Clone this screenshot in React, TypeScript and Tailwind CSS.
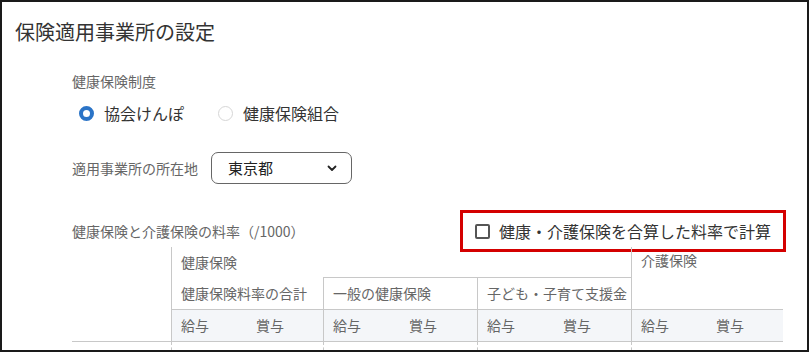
import React from 'react'

const font = { fontFamily: '"Noto Sans CJK JP", "Noto Sans", sans-serif' }

const Radio = ({ checked, label }: { checked: boolean; label: string }) => (
  <label className="flex items-center gap-[10px]">
    {checked ? (
      <span className="w-[15px] h-[15px] rounded-full border-[4px] border-[#2b74c7] bg-white" />
    ) : (
      <span className="w-[15px] h-[15px] rounded-full border border-[#d6d6d6] bg-white" />
    )}
    <span className="text-[16px] text-[#333]">{label}</span>
  </label>
)

const sub = ['給与', '賞与']

export default function App() {
  return (
    <div style={font} className="w-[809px] h-[352px] border-2 border-[#1a1a1a] bg-white overflow-hidden box-border">
      <h1 className="pl-[13px] pt-[15px] text-[20px] leading-[30px] text-[#333]">保険適用事業所の設定</h1>

      <div className="pl-[70px] pr-[21px]">
        <div className="mt-[24px] text-[14px] leading-[20px] text-[#666]">健康保険制度</div>
        <div className="mt-[11px] pl-[7px] flex items-center gap-[34px] h-[22px]">
          <Radio checked label="協会けんぽ" />
          <Radio checked={false} label="健康保険組合" />
        </div>

        <div className="mt-[28px] flex items-center gap-[13px]">
          <span className="text-[14px] text-[#666]">適用事業所の所在地</span>
          <div className="w-[141px] h-[32px] border border-[#666] rounded-[7px] flex items-center justify-between pl-[16px] pr-[14px]">
            <span className="text-[15px] text-[#222]">東京都</span>
            <svg width="10" height="7" viewBox="0 0 10 7" fill="none">
              <path d="M1.5 1.5 L5 5 L8.5 1.5" stroke="#222" strokeWidth="1.8" strokeLinecap="round" strokeLinejoin="round" />
            </svg>
          </div>
        </div>

        <div className="mt-[26px] flex items-center justify-between">
          <span className="text-[14px] text-[#666]">健康保険と介護保険の料率（/1000）</span>
          <div className="w-[326px] h-[42px] border-[3px] border-[#d40000] flex items-center pl-[12px] gap-[9px]">
            <span className="w-[15px] h-[15px] border-2 border-[#555] rounded-[2px]" />
            <span className="text-[16px] text-[#333]">健康・介護保険を合算した料率で計算</span>
          </div>
        </div>

        <div className="-mt-[5px] grid grid-cols-[99px_76px_76px_77px_77px_77px_77px_76px_76px] text-[14px] text-[#666]">
          <div className="row-span-2" />
          <div className="col-span-6 h-[30px] border-l border-[#c8c8c8] pl-[9px] flex items-center">健康保険</div>
          <div className="col-span-2 row-span-2 border-l border-[#c8c8c8] pl-[9px] pt-[3px]">介護保険</div>
          <div className="col-span-2 h-[32px] border-l border-[#c8c8c8] pl-[9px] flex items-center">健康保険料率の合計</div>
          <div className="col-span-2 h-[32px] border-l border-t border-[#c8c8c8] pl-[9px] flex items-center">一般の健康保険</div>
          <div className="col-span-2 h-[32px] border-l border-t border-[#c8c8c8] pl-[9px] flex items-center">子ども・子育て支援金</div>

          <div className="border-b border-[#c8c8c8]" />
          {[0, 1, 2, 3].map(g =>
            sub.map((s, i) => (
              <div
                key={`${g}-${i}`}
                className={`h-[33px] border-t border-b border-[#c8c8c8] bg-[#f4f6f9] pl-[9px] flex items-center ${i === 0 ? 'border-l' : ''}`}
              >
                {s}
              </div>
            ))
          )}

          <div />
          {[0, 1, 2, 3].map(g => (
            <div key={g} className="col-span-2 h-[30px] border-l border-dashed border-[#c8c8c8]" />
          ))}
        </div>
      </div>
    </div>
  )
}
